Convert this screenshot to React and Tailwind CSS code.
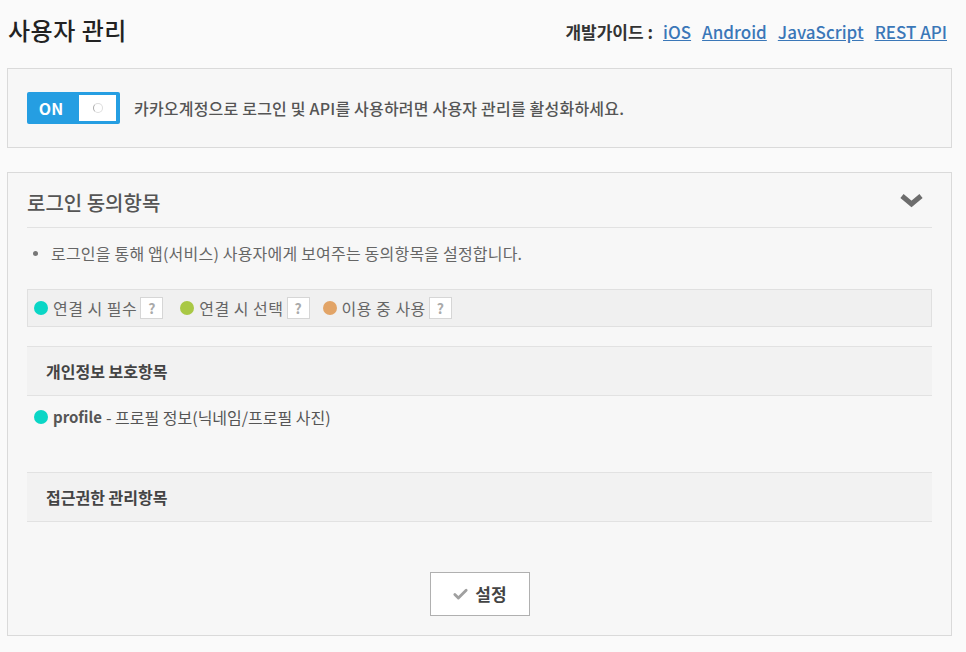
import { Check } from 'lucide-react';

const font = { fontFamily: '"Noto Sans CJK KR", "Noto Sans", sans-serif' };

const Help = () => (
  <span className="ml-[3px] inline-flex h-[22px] w-[23px] items-center justify-center border border-[#d6d6d6] bg-white text-[14px] font-bold text-[#aaa]">?</span>
);

const Legend = ({ color, label, className = '' }) => (
  <div className={`flex items-center ${className}`}>
    <span className={`h-[14px] w-[14px] rounded-full ${color}`}></span>
    <span className="ml-[5px] text-[16px] tracking-[0.5px] text-[#666]">{label}</span>
    <Help />
  </div>
);

const SectionHead = ({ children }) => (
  <div className="flex h-[50px] items-center border-y border-[#e2e2e2] bg-[#f2f2f2] pl-[19px] text-[16px] font-bold text-[#444]">
    {children}
  </div>
);

export default function App() {
  return (
    <div style={font} className="min-h-[652px] bg-[#fafafa] text-[#555]">
      {/* header */}
      <div className="flex h-[64px] items-center justify-between pl-[8px] pr-[19px]">
        <h1 className="-mt-[4px] text-[24px] font-medium tracking-[0.5px] text-[#222]">사용자 관리</h1>
        <div className="flex items-center gap-[11px] text-[17px]">
          <span className="mr-[-1px] font-bold text-[#333]">개발가이드 :</span>
          <a className="font-medium text-[#3a77b8] underline">iOS</a>
          <a className="font-medium text-[#3a77b8] underline">Android</a>
          <a className="font-medium text-[#3a77b8] underline">JavaScript</a>
          <a className="font-medium text-[#3a77b8] underline">REST API</a>
        </div>
      </div>

      {/* activation */}
      <div className="mx-[7px] mt-[4px] flex h-[80px] w-[945px] items-center border border-[#dadada] bg-[#f7f7f7] px-[19px]">
        <div className="flex h-[32px] w-[93px] items-center rounded-[2px] bg-[#259ee2] p-[3px]">
          <span className="w-[42px] text-center text-[16px] font-bold text-white">ON</span>
          <span className="ml-[7px] flex h-[26px] w-[37px] items-center justify-center bg-white">
            <span className="h-[10px] w-[10px] rounded-full border border-[#ddd] border-l-[#aaa]"></span>
          </span>
        </div>
        <p className="ml-[14px] text-[16px] font-medium tracking-[0.2px] text-[#555]">
          카카오계정으로 로그인 및 API를 사용하려면 사용자 관리를 활성화하세요.
        </p>
      </div>

      {/* consent */}
      <div className="mx-[7px] mt-[24px] w-[945px] border border-[#dadada] bg-[#f7f7f7] px-[19px] pb-[19px]">
        <div className="flex items-center justify-between border-b border-[#e2e2e2] pb-[10px] pr-[9px] pt-[16px]">
          <h2 className="text-[20px] leading-[28px] font-medium text-[#555]">로그인 동의항목</h2>
          <svg width="23" height="15" viewBox="0 0 23 15" className="-mt-[6px]">
            <path d="M2 3 L11.5 11 L21 3" fill="none" stroke="#6d6d6d" strokeWidth="5" strokeLinejoin="miter" />
          </svg>
        </div>

        <div className="mt-[15px] flex items-center pl-[6px] text-[16px] leading-[20px] tracking-[0.2px] text-[#666]">
          <span className="h-[5px] w-[5px] rounded-full bg-[#777]"></span>
          <span className="ml-[13px]">로그인을 통해 앱(서비스) 사용자에게 보여주는 동의항목을 설정합니다.</span>
        </div>

        <div className="mt-[26px] flex h-[38px] items-center border border-[#e0e0e0] bg-[#f0f0f0] pl-[6px]">
          <Legend color="bg-[#0ad6c6]" label="연결 시 필수" />
          <Legend color="bg-[#a9c845]" label="연결 시 선택" className="ml-[17px]" />
          <Legend color="bg-[#e2a467]" label="이용 중 사용" className="ml-[13px]" />
        </div>

        <div className="mt-[19px]">
          <SectionHead>개인정보 보호항목</SectionHead>
        </div>

        <div className="mt-[10px] flex h-[22px] items-center pl-[7px]">
          <span className="h-[14px] w-[14px] rounded-full bg-[#0ad6c6]"></span>
          <span className="ml-[5px] text-[15px] font-bold text-[#555]">profile</span>
          <span className="ml-[4px] text-[16px] text-[#555]">- 프로필 정보(닉네임/프로필 사진)</span>
        </div>

        <div className="mt-[44px]">
          <SectionHead>접근권한 관리항목</SectionHead>
        </div>

        <div className="mt-[50px] flex justify-center">
          <button className="flex h-[44px] w-[100px] items-center justify-center gap-[6px] border border-[#b0b0b0] bg-white text-[17px] font-bold text-[#444]">
            <Check size={17} strokeWidth={4} className="text-[#a0a0a0]" />
            설정
          </button>
        </div>
      </div>
    </div>
  );
}
